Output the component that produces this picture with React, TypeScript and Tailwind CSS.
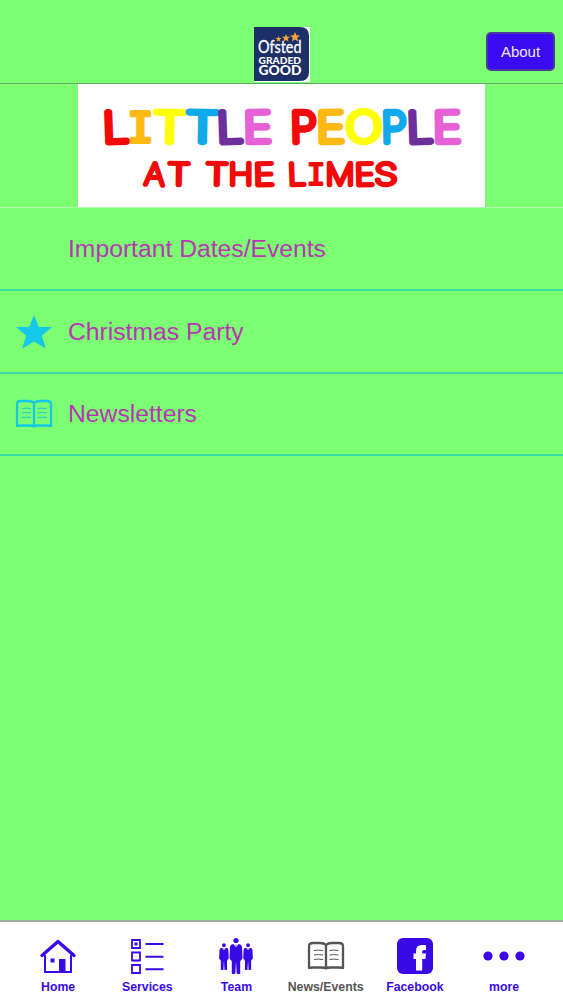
import type { ReactNode } from "react";

type Letter = { char: string; x: number; width: number; color: string; mono?: boolean; tilt?: number };

const titleLetters: Letter[] = [
	{ char: "L", x: 102.5, width: 26, color: "#f20a0a", tilt: -2 },
	{ char: "I", x: 127, width: 26, color: "#ffb914", mono: true },
	{ char: "T", x: 153, width: 33, color: "#ffff0a", tilt: 1 },
	{ char: "T", x: 185.5, width: 33, color: "#12a9ea", tilt: 1 },
	{ char: "L", x: 216.5, width: 26, color: "#6c2f9c", tilt: -2 },
	{ char: "E", x: 243, width: 28, color: "#e660d6", tilt: -1 },
	{ char: "P", x: 290, width: 26, color: "#f20a0a", tilt: -1 },
	{ char: "E", x: 316, width: 28, color: "#ffb914", tilt: -1 },
	{ char: "O", x: 345.5, width: 36, color: "#ffff0a" },
	{ char: "P", x: 381, width: 25, color: "#12a9ea", tilt: -1 },
	{ char: "L", x: 406.5, width: 26, color: "#6c2f9c", tilt: -2 },
	{ char: "E", x: 432.5, width: 28, color: "#e660d6", tilt: -1 },
];

const subtitleLetters: Letter[] = [
	{ char: "A", x: 144, width: 20, color: "#f20a0a", tilt: 3 },
	{ char: "T", x: 167, width: 23, color: "#f20a0a", tilt: 1 },
	{ char: "T", x: 205, width: 23, color: "#f20a0a", tilt: 1 },
	{ char: "H", x: 228, width: 24.5, color: "#f20a0a" },
	{ char: "E", x: 253, width: 21, color: "#f20a0a", tilt: -1 },
	{ char: "L", x: 287.5, width: 18, color: "#f20a0a", tilt: -2 },
	{ char: "I", x: 306, width: 19, color: "#f20a0a", mono: true },
	{ char: "M", x: 325, width: 29, color: "#f20a0a" },
	{ char: "E", x: 354, width: 20, color: "#f20a0a", tilt: -1 },
	{ char: "S", x: 374, width: 23, color: "#f20a0a" },
];

function Letters({ letters, y, size, stroke }: { letters: Letter[]; y: number; size: number; stroke: number }) {
	return (
		<>
			{letters.map((l) => (
				<text
					key={l.x}
					x={l.x}
					y={y}
					transform={`rotate(${l.tilt ?? 0} ${l.x + l.width / 2} ${y - size / 3})`}
					textLength={l.width}
					lengthAdjust="spacingAndGlyphs"
					fontFamily={l.mono ? "'DejaVu Sans Mono', monospace" : "Inter, sans-serif"}
					fontSize={size}
					fontWeight={l.mono ? 400 : 100}
					fill={l.color}
					stroke={l.color}
					strokeWidth={l.mono ? stroke - 2.6 : stroke}
					strokeLinejoin="round"
				>
					{l.char}
				</text>
			))}
		</>
	);
}

function Banner() {
	return (
		<svg viewBox="77.5 84 407.5 123" className="block h-[123px] w-[407.5px] bg-white">
			<Letters letters={titleLetters} y={142} size={41.5} stroke={6.4} />
			<Letters letters={subtitleLetters} y={185} size={30} stroke={4.4} />
		</svg>
	);
}

function OfstedLogo() {
	const star = "M0-5 1.4-1.7 5-1.5 2.2.8 3.2 4.5 0 2.5-3.2 4.5-2.2.8-5-1.5-1.4-1.7Z";
	return (
		<svg viewBox="0 0 56 55" className="h-[55px] w-14">
			<path fill="#fff" d="M0 0h56v55H0z" />
			<path fill="#1c2f66" d="M0 0h46q9 0 9 9v36q0 9-9 9H0z" />
			<g fill="#f3a33a">
				<path d={star} transform="translate(24.5 12) scale(.6)" />
				<path d={star} transform="translate(32 11) scale(.8)" />
				<path d={star} transform="translate(41 10)" />
			</g>
			<g fill="#fff" fontFamily="Lato, sans-serif">
				<text x="4" y="26" fontSize="16.500" stroke="#fff" strokeWidth=".3" textLength="43.5" lengthAdjust="spacingAndGlyphs">Ofsted</text>
				<text x="4.5" y="36.500" fontSize="9.500" fontWeight="900" textLength="42.5" lengthAdjust="spacingAndGlyphs">GRADED</text>
				<text x="4.5" y="48" fontSize="13" fontWeight="900" textLength="43" lengthAdjust="spacingAndGlyphs">GOOD</text>
			</g>
		</svg>
	);
}

function BookIcon() {
	return (
		<svg viewBox="0 0 38 30" className="h-[30px] w-[38px]" fill="none" stroke="currentColor" strokeLinejoin="round">
			<path strokeWidth="2.300" d="M19 4Q17 2 13 2H6Q2 2 2 5v22Q3 26.500 7 26.500h7q4 0 5 1 1-1 5-1h7q4 0 5 .5V5q0-3-4-3h-7q-4 0-6 2ZV27.500" />
			<path strokeWidth="1" d="M7 9.500q4-.8 9 0M7 14q4-.8 9 0M7 18.500q4-.8 9 0M22.500 9.500q4-.8 9 0M22.500 14q4-.8 9 0M22.500 18.500q4-.8 9 0" />
		</svg>
	);
}

function StarIcon() {
	return (
		<svg viewBox="0 0 36 34" className="mt-0.5 h-[34px] w-9" fill="currentColor">
			<path d="M18 0 22.800 12H36L25.800 20.800 29.800 33.500 18 26.500 6.200 33.500 10.200 20.800 0 12H13.200Z" />
		</svg>
	);
}

function HomeIcon() {
	return (
		<svg viewBox="0 0 38 36" className="h-9 w-[38px]" fill="none" stroke="currentColor">
			<path strokeWidth="3.400" strokeLinecap="round" strokeLinejoin="round" d="M3 17.500 19 3.500l16 14" />
			<path strokeWidth="2" d="M6 17v17h26V17" />
			<path fill="currentColor" stroke="none" d="M11.500 20.500h4v4h-4zM20 21h6.500v13H20z" />
		</svg>
	);
}

function ServicesIcon() {
	return (
		<svg viewBox="0 0 34 36" className="h-9 w-[34px]" fill="none" stroke="currentColor" strokeWidth="1.800">
			<path d="M2 2h8v8H2zM2 14.500h8v8H2zM2 27h8v8H2z" />
			<path d="M15.500 6h18M15.500 18.700h18M15.500 31.300h18" strokeWidth="2" />
			<path d="M4.500 4.500h3v3h-3z" fill="currentColor" stroke="none" />
		</svg>
	);
}

function Person({ transform }: { transform: string }) {
	return (
		<g transform={transform}>
			<circle cx="6" cy="3" r="2.600" />
			<path d="M3.500 6.500 6 10l2.500-3.500q3 .3 3.500 2.500l.5 11q-.1 2-1.500 2.500L10.200 24v12q-1.500 1-3.500 0L6 24l-.7 12q-2 1-3.500 0V24L1 22.500Q-.4 22-.5 20L0 9Q.5 6.800 3.500 6.500Z" />
			<path d="M6 7v4" stroke="currentColor" strokeWidth=".8" />
		</g>
	);
}

function TeamIcon() {
	return (
		<svg viewBox="0 0 34 38" className="h-[38px] w-[34px]" fill="currentColor">
			<Person transform="translate(.5 6) scale(.74 .74)" />
			<Person transform="translate(11 0.500)" />
			<Person transform="translate(24.600 6) scale(.74 .74)" />
		</svg>
	);
}

function FacebookIcon() {
	return (
		<svg viewBox="0 0 36 36" className="size-9">
			<rect width="36" height="36" rx="6" fill="currentColor" />
			<path fill="#fff" d="M19 32.500V21h-2.500v-5.500H19V13q0-6 6-6h4v5h-2q-1.800 0-1.800 1.500v2H29l-.6 5.500h-3.200v11.500Z" />
		</svg>
	);
}

function MoreIcon() {
	return (
		<svg viewBox="0 0 42 12" className="h-3 w-[42px]" fill="currentColor">
			<circle cx="5" cy="6" r="4.600" />
			<circle cx="21" cy="6" r="4.600" />
			<circle cx="37" cy="6" r="4.600" />
		</svg>
	);
}

const rows: { label: string; icon?: ReactNode }[] = [
	{ label: "Important Dates/Events" },
	{ label: "Christmas Party", icon: <StarIcon /> },
	{ label: "Newsletters", icon: <BookIcon /> },
];

const tabs: { label: string; icon: ReactNode; active?: boolean }[] = [
	{ label: "Home", icon: <HomeIcon /> },
	{ label: "Services", icon: <ServicesIcon /> },
	{ label: "Team", icon: <TeamIcon /> },
	{ label: "News/Events", icon: <BookIcon />, active: true },
	{ label: "Facebook", icon: <FacebookIcon /> },
	{ label: "more", icon: <MoreIcon /> },
];

export default function App() {
	return (
		<div className="flex h-[1000px] w-[563px] flex-col overflow-hidden bg-[#7cff73] font-['Liberation_Sans',Arial,sans-serif]">
			<header className="grid h-[84px] shrink-0 grid-cols-[1fr_56px_1fr] items-end border-b border-[#5fa765]">
				<span />
				<div className="mb-px">
					<OfstedLogo />
				</div>
				<button className="mr-2 mb-3 h-[39px] w-[69px] justify-self-end rounded-[5px] border-2 border-[#4a3a9c] bg-[#3a0af0] pt-px text-[15px] text-[#f0e8ff]">
					About
				</button>
			</header>

			<div className="flex shrink-0 justify-center border-b border-[#b4f8b4]">
				<Banner />
			</div>

			<ul>
				{rows.map((row) => (
					<li key={row.label} className="flex h-[82.800px] items-center border-b-2 border-[#37dca5]">
						<div className="flex w-[68px] justify-center text-[#14c8e6]">{row.icon}</div>
						<span className="text-[24.700px] text-[#b836b4]">{row.label}</span>
					</li>
				))}
			</ul>

			{/* Bottom tab bar */}
			<nav className="mt-auto flex h-20 shrink-0 border-t-2 border-[#9aaa9c] bg-white pl-[13.500px]">
				{tabs.map((tab) => (
					<div
						key={tab.label}
						className={`flex w-[89.200px] flex-col items-center pt-[15px] ${tab.active ? "text-[#555555]" : "text-[#3a0ae6]"}`}
					>
						<div className="flex h-[38px] items-center">{tab.icon}</div>
						<span className="mt-[5px] text-[12.300px] leading-[14px] font-bold whitespace-nowrap">{tab.label}</span>
					</div>
				))}
			</nav>
		</div>
	);
}
